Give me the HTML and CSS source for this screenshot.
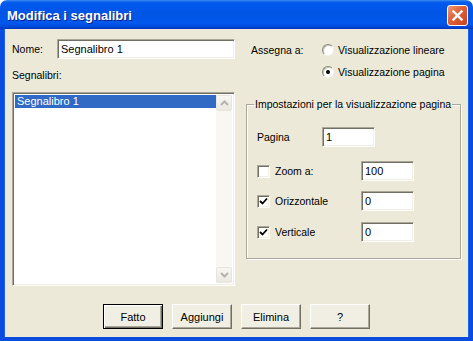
FILE: index.html
```html
<!DOCTYPE html>
<html>
<head>
    <title>Modifica i segnalibri</title>
    <meta charset="utf-8" />
    <link rel="stylesheet" href="styles.css">
</head>
<body>
    <div class="window">
        <!-- TITLE BAR -->
        <div class="titlebar">
            <span class="title">Modifica i segnalibri</span>
            <span class="close">
                <svg width="13" height="13" viewBox="0 0 13 13"><path d="M2.5,2.5 L10.5,10.5 M10.5,2.5 L2.5,10.5" stroke="#fff" stroke-width="2.4" stroke-linecap="square"/></svg>
            </span>
        </div>

        <div class="content">
            <div class="top">
                <!-- LEFT: name + list -->
                <div class="left">
                    <div class="name-row">
                        <span class="name-label">Nome:</span>
                        <div class="field name-field">Segnalibro 1</div>
                    </div>
                    <div class="list-label">Segnalibri:</div>
                    <div class="listbox">
                        <div class="items">
                            <div class="item selected">Segnalibro 1</div>
                        </div>
                        <div class="scrollbar">
                            <span class="sbtn"><svg width="9" height="6" viewBox="0 0 9 6"><path d="M1,5 L4.5,1.5 L8,5" fill="none" stroke="#b4b3ac" stroke-width="2"/></svg></span>
                            <span class="strack"></span>
                            <span class="sbtn"><svg width="9" height="6" viewBox="0 0 9 6"><path d="M1,1 L4.5,4.5 L8,1" fill="none" stroke="#b4b3ac" stroke-width="2"/></svg></span>
                        </div>
                    </div>
                </div>

                <!-- RIGHT: assign + page settings -->
                <div class="right">
                    <div class="assign">
                        <span class="assign-label">Assegna a:</span>
                        <div class="radios">
                            <div class="opt"><span class="radio"></span>Visualizzazione lineare</div>
                            <div class="opt"><span class="radio on"></span>Visualizzazione pagina</div>
                        </div>
                    </div>

                    <fieldset class="group">
                        <legend>Impostazioni per la visualizzazione pagina</legend>
                        <div class="row row-page">
                            <span class="page-label">Pagina</span>
                            <div class="field small-field">1</div>
                        </div>
                        <div class="row row-zoom">
                            <span class="chk-label"><span class="check"></span>Zoom a:</span>
                            <div class="field small-field">100</div>
                        </div>
                        <div class="row row-horiz">
                            <span class="chk-label"><span class="check"><svg width="9" height="9" viewBox="0 0 9 9"><path d="M1,4 L3.5,6.5 L8,1.5" fill="none" stroke="#000" stroke-width="1.8"/></svg></span>Orizzontale</span>
                            <div class="field small-field">0</div>
                        </div>
                        <div class="row row-vert">
                            <span class="chk-label"><span class="check"><svg width="9" height="9" viewBox="0 0 9 9"><path d="M1,4 L3.5,6.5 L8,1.5" fill="none" stroke="#000" stroke-width="1.8"/></svg></span>Verticale</span>
                            <div class="field small-field">0</div>
                        </div>
                    </fieldset>
                </div>
            </div>

            <!-- BUTTONS -->
            <div class="buttons">
                <span class="btn default">Fatto</span>
                <span class="btn">Aggiungi</span>
                <span class="btn">Elimina</span>
                <span class="btn">?</span>
            </div>
        </div>
    </div>
</body>
</html>
```

FILE: styles.css
```css
html, body {
    margin: 0;
    padding: 0;
    background: #fff;
    font-family: "Liberation Sans", Arial, sans-serif;
    font-size: 10.5px;
    color: #000;
}

/*** whole dialog window ***/
.window {
    width: 473px;
    height: 341px;
    display: flex;
    flex-direction: column;
    overflow: hidden;
    border-radius: 7px 7px 0 0;
}

/*** blue XP title bar ***/
.titlebar {
    height: 29px;
    flex: none;
    display: flex;
    align-items: center;
    justify-content: space-between;
    padding: 0 5px 0 7px;
    background: linear-gradient(#3c8ff5 0, #0a5fe6 2px, #0058ee 4px, #0055e4 45%, #0057ec 80%, #0148d8 93%, #0036b8 100%);
}
.title {
    font-weight: bold;
    font-size: 13px;
    color: #fff;
    text-shadow: 1px 1px 0 #0a1e8c;
    margin-top: 1px;
}
.close {
    width: 19px;
    height: 19px;
    margin-top: 2px;
    display: flex;
    align-items: center;
    justify-content: center;
    border: 1px solid #fff;
    border-radius: 3px;
    background: linear-gradient(135deg, #f09a7c 0, #e2643b 40%, #c8421b 100%);
}

/*** beige client area with blue frame ***/
.content {
    flex: 1;
    display: flex;
    flex-direction: column;
    padding: 10px 8px 0 8px;
    background: #ece9d8;
    border-left: 4px solid #0a4be0;
    border-right: 4px solid #0a4be0;
    border-bottom: 4px solid #0a4be0;
    box-shadow: inset 1px 0 0 #1c62ee, inset -1px 0 0 #1c62ee;
}
.top { display: flex; }

/*** sunken text fields ***/
.field {
    box-sizing: border-box;
    height: 20px;
    line-height: 18px;
    padding-left: 3px;
    font-size: 11px;
    background: #fff;
    border: 1px solid;
    border-color: #aca899 #fff #fff #aca899;
    box-shadow: inset 1px 1px 0 #716f64, inset -1px -1px 0 #f1efe2;
}

.left { width: 223px; }
.name-row { display: flex; align-items: center; }
.name-label { width: 45px; }
.name-field { width: 178px; }
.list-label { margin-top: 10px; line-height: 13px; }

.listbox {
    box-sizing: border-box;
    margin-top: 10px;
    height: 194px;
    display: flex;
    padding: 2px;
    background: #fff;
    border: 1px solid;
    border-color: #aca899 #fff #fff #aca899;
    box-shadow: inset 1px 1px 0 #716f64, inset -1px -1px 0 #f1efe2;
}
.items { flex: 1; }
.item { height: 13px; line-height: 13px; padding-left: 2px; font-size: 11px; }
.item.selected { background: #316ac5; color: #fff; }

/*** disabled scrollbar ***/
.scrollbar {
    width: 16px;
    display: flex;
    flex-direction: column;
    background: #f8f7f2;
}
.strack { flex: 1; }
.sbtn {
    box-sizing: border-box;
    height: 16px;
    display: flex;
    align-items: center;
    justify-content: center;
    border: 1px solid #e8e6dc;
    border-radius: 2px;
    background: linear-gradient(#f7f6f2, #ebe9e0);
}

/*** right column ***/
.right { width: 215px; margin-left: 11px; }
.assign { display: flex; margin-top: 1px; }
.assign-label { width: 71px; padding-left: 5px; line-height: 20px; }
.radios { display: flex; flex-direction: column; gap: 2px; }
.opt { display: flex; align-items: center; height: 20px; }
.radio {
    box-sizing: border-box;
    width: 12px;
    height: 12px;
    margin-right: 4px;
    border-radius: 50%;
    background: #fff;
    border: 1px solid;
    border-color: #8b8878 #f4f3ee #f4f3ee #8b8878;
    box-shadow: inset 1px 1px 0 #c9c7ba;
    display: flex;
    align-items: center;
    justify-content: center;
}
.radio.on::after {
    content: "";
    width: 4px;
    height: 4px;
    border-radius: 50%;
    background: #000;
}

/*** etched group box ***/
.group {
    box-sizing: border-box;
    margin: 16px 0 0 0;
    padding: 16px 0 0 10px;
    height: 161px;
    border: 1px solid #aca899;
    box-shadow: 1px 1px 0 #fff, inset 1px 1px 0 #fff;
}
.group legend {
    padding: 0 1px;
    margin-left: -3px;
    line-height: 13px;
    white-space: nowrap;
}
.row { display: flex; align-items: center; }
.page-label { width: 65px; }
.chk-label { width: 104px; display: flex; align-items: center; }
.small-field { width: 53px; }
.row-zoom { margin-top: 14px; }
.row-horiz { margin-top: 10px; }
.row-vert { margin-top: 11px; }

.check {
    box-sizing: border-box;
    width: 13px;
    height: 13px;
    margin-right: 5px;
    display: flex;
    align-items: center;
    justify-content: center;
    background: #fff;
    border: 1px solid;
    border-color: #aca899 #fff #fff #aca899;
    box-shadow: inset 1px 1px 0 #716f64, inset -1px -1px 0 #f1efe2;
}

/*** bottom buttons ***/
.buttons {
    display: flex;
    justify-content: center;
    gap: 9px;
    margin-top: 18px;
}
.btn {
    box-sizing: border-box;
    width: 60px;
    height: 25px;
    display: flex;
    align-items: center;
    justify-content: center;
    font-size: 11px;
    background: #f1efe4;
    border: 1px solid;
    border-color: #fff #716f64 #716f64 #fff;
    box-shadow: inset -1px -1px 0 #aca899;
}
.btn.default {
    border: 1px solid #000;
    box-shadow: inset 1px 1px 0 #fff, inset -1px -1px 0 #716f64, inset -2px -2px 0 #aca899;
}
```
